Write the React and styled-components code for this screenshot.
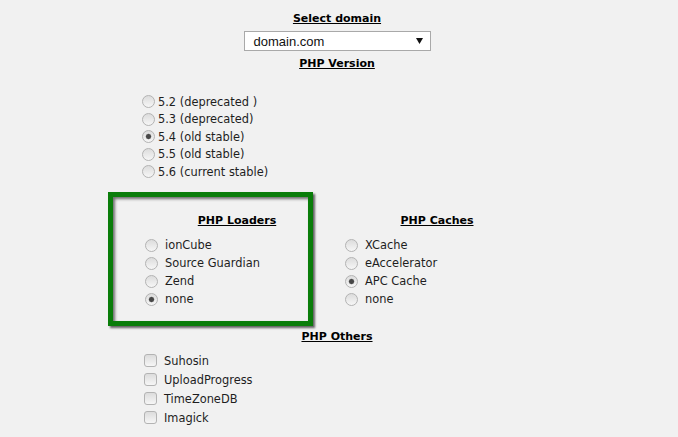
import React from 'react';
import styled, { createGlobalStyle } from 'styled-components';

const GlobalStyle = createGlobalStyle`
  body {
    margin: 0;
    background: #f1f1f1;
    font-family: "DejaVu Sans", Verdana, sans-serif;
    font-size: 11px;
    color: #1e1e1e;
  }
`

const Page = styled.div`
  width: 678px;
  padding-top: 12px;
`

const Title = styled.h2`
  margin: ${props => props.$mt || 0}px 0 0;
  padding-right: ${props => props.$pr ?? 4}px;
  font-size: 11px;
  line-height: 14px;
  font-weight: bold;
  text-align: center;
  text-decoration: underline;
  color: #000;
`

const SelectBox = styled.div`
  box-sizing: border-box;
  width: 187px;
  height: 20px;
  margin: 5px auto 0;
  position: relative;
  left: -2px;
  padding: 0 7px 0 9px;
  display: flex;
  align-items: center;
  justify-content: space-between;
  background: #fff;
  border: 1px solid #a9a9a9;
  font-family: "Liberation Sans", Arial, sans-serif;
  font-size: 13px;
  color: #111;
`

const OptionList = styled.div`
  display: flex;
  flex-direction: column;
  margin-top: ${props => props.$mt || 0}px;
  margin-left: ${props => props.$left || 0}px;
`

const Option = styled.label`
  display: flex;
  align-items: center;
  gap: ${props => props.$gap}px;
  height: ${props => props.$h}px;
  font-size: 11.4px;
  white-space: nowrap;
`

const Radio = styled.input.attrs({ type: 'radio' })`
  appearance: none;
  box-sizing: border-box;
  width: 13px;
  height: 13px;
  margin: 0;
  border-radius: 50%;
  border: 1px solid #b3b3b3;
  background: linear-gradient(#dcdcdc, #f6f6f6);
  &:checked {
    background:
      radial-gradient(circle, #474747 0 2px, #8a8a8a 2.6px, transparent 3.2px),
      linear-gradient(#dcdcdc, #f6f6f6);
  }
`

const Checkbox = styled.input.attrs({ type: 'checkbox' })`
  appearance: none;
  box-sizing: border-box;
  width: 13px;
  height: 13px;
  margin: 0;
  border-radius: 3px;
  border: 1px solid #b3b3b3;
  background: linear-gradient(#dcdcdc, #f6f6f6);
`

const Columns = styled.div`
  position: relative;
  display: flex;
  margin: 11.5px 0 0 137px;
  padding: 22px 0 18px;
`

const Column = styled.div`
  width: 200px;
`

const Highlight = styled.div`
  position: absolute;
  top: 0;
  left: -29px;
  width: 205px;
  height: 134px;
  box-sizing: border-box;
  border: 5px solid #0a7d0a;
  box-shadow: 2px 2px 2px rgba(0, 0, 0, 0.6), inset 2px 2px 3px rgba(0, 0, 0, 0.55);
  pointer-events: none;
`

const versions = [
  { label: '5.2 (deprecated )' },
  { label: '5.3 (deprecated)' },
  { label: '5.4 (old stable)', checked: true },
  { label: '5.5 (old stable)' },
  { label: '5.6 (current stable)' },
]

const loaders = [
  { label: 'ionCube' },
  { label: 'Source Guardian' },
  { label: 'Zend' },
  { label: 'none', checked: true },
]

const caches = [
  { label: 'XCache' },
  { label: 'eAccelerator' },
  { label: 'APC Cache', checked: true },
  { label: 'none' },
]

const others = ['Suhosin', 'UploadProgress', 'TimeZoneDB', 'Imagick']

const RadioGroup = ({ name, items, gap, h, left, mt }) => (
  <OptionList $left={left} $mt={mt}>
    {items.map(it => (
      <Option key={it.label} $gap={gap} $h={h}>
        <Radio name={name} defaultChecked={!!it.checked} />
        <span>{it.label}</span>
      </Option>
    ))}
  </OptionList>
)

export default function App() {
  return (
    <Page>
      <GlobalStyle />
      <Title>Select domain</Title>
      <SelectBox>
        <span>domain.com</span>
        <svg width="7" height="6" viewBox="0 0 7 6">
          <polygon points="0,0 7,0 3.5,6" fill="#111" />
        </svg>
      </SelectBox>

      <Title $mt={6}>PHP Version</Title>
      <RadioGroup name="version" items={versions} gap={3} h={17.5} left={142} mt={22} />

      <Columns>
        <Column>
          <Title $pr={0}>PHP Loaders</Title>
          <RadioGroup name="loader" items={loaders} gap={7} h={18} left={8} mt={8} />
        </Column>
        <Column>
          <Title $pr={0}>PHP Caches</Title>
          <RadioGroup name="cache" items={caches} gap={7} h={18} left={8} mt={8} />
        </Column>
        <Highlight />
      </Columns>

      <Title $mt={4}>PHP Others</Title>
      <OptionList $left={144} $mt={7}>
        {others.map(o => (
          <Option key={o} $gap={7} $h={19}>
            <Checkbox />
            <span>{o}</span>
          </Option>
        ))}
      </OptionList>
    </Page>
  );
}
